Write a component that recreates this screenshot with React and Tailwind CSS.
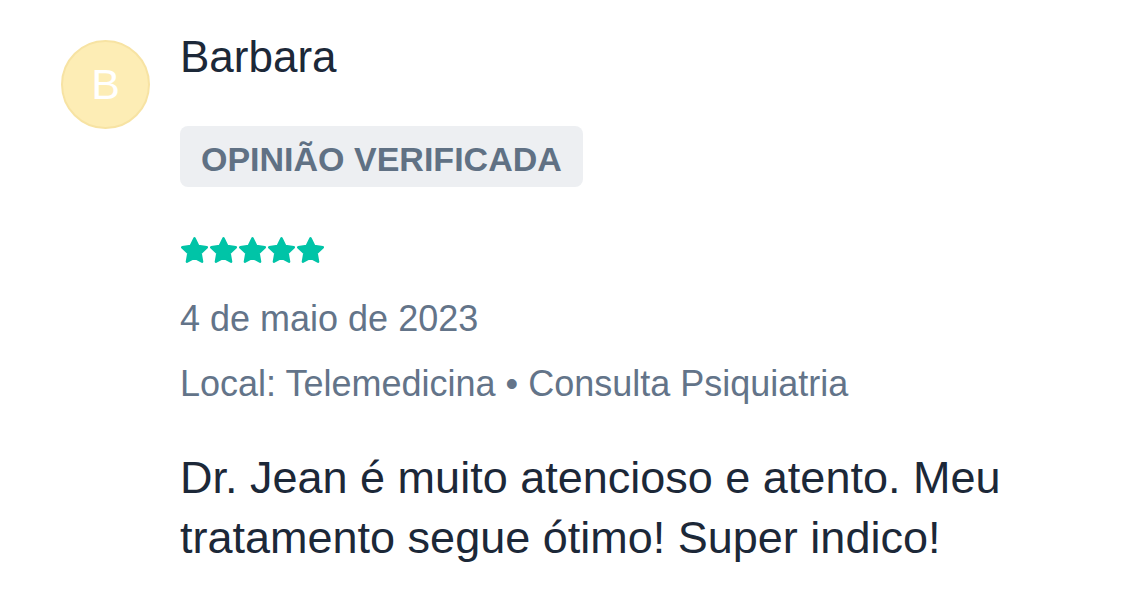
import React from "react";

const font = { fontFamily: '"Liberation Sans", Arial, sans-serif' };

function Star() {
  return (
    <svg width="27" height="26" viewBox="1 1 22 21" className="shrink-0">
      <path
        d="M12 2l3.09 6.26L22 9.27l-5 4.87 1.18 6.88L12 17.77l-6.18 3.25L7 14.14 2 9.27l6.91-1.01L12 2z"
        fill="#00c4a7"
        stroke="#00c4a7"
        strokeWidth="2"
        strokeLinejoin="round"
      />
    </svg>
  );
}

export default function App() {
  return (
    <div className="w-[1125px] h-[615px] bg-white overflow-hidden" style={font}>
      <div className="flex gap-[30px] pl-[61px] pt-[31px]">
        {/* Avatar */}
        <div className="mt-[9px] w-[89px] h-[89px] shrink-0 rounded-full bg-[#fdedb5] border-2 border-[#f7e3a3] flex items-center justify-center">
          <span className="text-white text-[43px] leading-none">B</span>
        </div>

        {/* Review */}
        <div className="flex flex-col items-start">
          <div className="text-[44px] leading-[52px] text-[#1c2838]">Barbara</div>

          <div className="mt-[43px] rounded-lg bg-[#edeff2] px-[21px] pt-[16px] pb-[11px] text-[34px] leading-[34px] font-bold text-[#607184]">
            OPINIÃO VERIFICADA
          </div>

          <div className="mt-[50px] flex gap-[2px] pl-[1px]">
            <Star />
            <Star />
            <Star />
            <Star />
            <Star />
          </div>

          <div className="mt-[36px] text-[36px] leading-[40px] text-[#637489]">
            4 de maio de 2023
          </div>

          <div className="mt-[25px] text-[36px] leading-[40px] text-[#637489]">
            Local: Telemedicina • Consulta Psiquiatria
          </div>

          <p className="mt-[44px] w-[860px] text-[45px] leading-[60px] text-[#1c2838]">
            Dr. Jean é muito atencioso e atento. Meu tratamento segue ótimo! Super indico!
          </p>
        </div>
      </div>
    </div>
  );
}
